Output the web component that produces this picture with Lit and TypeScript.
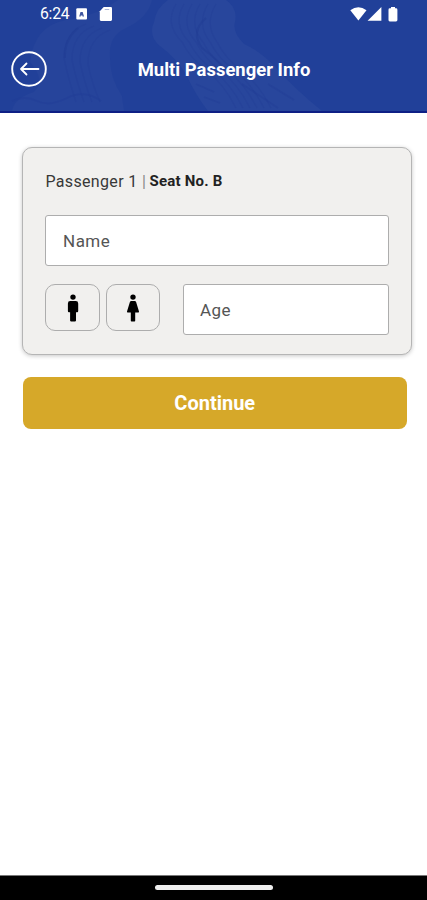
import { LitElement, html, css, svg } from "lit";
import { customElement, property } from "lit/decorators.js";

const manIcon = html`<svg width="12" height="29" viewBox="0 0 12 29">
  <circle cx="6" cy="3.1" r="2.7" />
  <path d="M3.2 7h5.6Q11.2 7 11.2 9.4V17q0 1.2-1 1.2H9V26.6q0 .8-.8.8H3.9q-.8 0-.8-.8V18.2H1.9q-1 0-1-1.2V9.4Q.9 7 3.2 7z" />
</svg>`;

const womanIcon = html`<svg width="14" height="29" viewBox="0 0 14 29">
  <circle cx="7" cy="3.1" r="2.7" />
  <path d="M5.3 7h3.4q1 0 1.4 1L13 17.6q.2.9-.7.9H9.2v8.2q0 .7-.7.7h-3q-.7 0-.7-.7v-8.2H1.7q-.9 0-.7-.9L3.9 8q.4-1 1.4-1z" />
</svg>`;

const ridges = [0, 1, 2, 3, 4, 5];

@customElement("status-bar")
class StatusBar extends LitElement {
  static styles = css`
    :host { display: flex; height: 28px; align-items: center; box-sizing: border-box; padding: 0 29px 0 40px; color: #fff; }
    .time { font-size: 15.7px; line-height: 28px; width: 36px; letter-spacing: -0.2px; }
    svg { display: block; flex: none; }
    .card { margin-left: 11px; }
    .space { flex: 1; }
    .battery { margin-left: 6px; }
  `;
  render() {
    return html`
      <span class="time">6:24</span>
      <svg width="12" height="12" viewBox="0 0 12 12"><rect x=".3" y=".3" width="10.7" height="11.2" rx="1" fill="#fff" /><path d="M3.200 8.500l1.300-4.500h2.200l1.300 4.500H6.500V7.500H4.700v1z" fill="#3f569f" /></svg>
      <svg class="card" width="14" height="14" viewBox="0 0 14 14"><path d="M4.700 0H11.800q1.200 0 1.200 1.200v11.600q0 1.100-1.200 1.100H2Q.8 13.900.8 12.800V4.300z" fill="#fff" /><path d="M5.700 2.500h4.500" stroke="#aeb8da" stroke-width="1" /></svg>
      <span class="space"></span>
      <svg width="17" height="14" viewBox="0 0 17 14"><path d="M.3 3.3Q8.3-3 16.5 3.3L8.4 13.6z" fill="#fff" /></svg>
      <svg width="15" height="14" viewBox="0 0 15 14"><path d="M14.4 0v13.7H.6z" fill="#fff" /></svg>
      <svg class="battery" width="10" height="15" viewBox="0 0 10 15"><path d="M3 0h4v1.300h1q1.400 0 1.400 1.400v10.400q0 1.300-1.400 1.300H1.800Q.5 14.400.5 13.100V2.700q0-1.400 1.300-1.400H3z" fill="#fff" /></svg>
    `;
  }
}

@customElement("passenger-card")
class PassengerCard extends LitElement {
  @property({ type: Number }) number = 1;
  @property() seat = "B";

  static styles = css`
    :host { display: block; box-sizing: border-box; height: 208px; border: 1px solid #b5b5b5; border-radius: 10px; background: #f1f0ee; padding: 22px 22px 0; box-shadow: 0 1px 4px rgba(0, 0, 0, 0.22); }
    .title { display: flex; height: 24px; line-height: 24px; font-size: 16px; color: #383838; margin-bottom: 21px; white-space: pre; }
    .who { letter-spacing: 0.33px; width: 97px; padding-left: 0.5px; box-sizing: border-box; }
    .bar { width: 7.500px; color: #888; }
    .seat { font-size: 15px; font-weight: 700; color: #222; letter-spacing: 0.22px; line-height: 23px; }
    .field { box-sizing: border-box; height: 51px; border: 1px solid #adadad; border-radius: 3px; background: #fff; padding-left: 17px; font-size: 17px; line-height: 50px; color: #555; letter-spacing: 0.5px; }
    .row { display: flex; margin-top: 18px; }
    .gender { box-sizing: border-box; width: 55px; height: 47px; border: 1px solid #adadad; border-radius: 10px; display: flex; align-items: center; justify-content: center; margin-right: 6px; padding-top: 2px; }
    .gender.last { width: 54px; margin-right: 23px; }
    .grow { flex: 1; letter-spacing: 0.4px; padding-left: 16px; }
    svg { display: block; fill: #000; }
  `;
  render() {
    return html`
      <div class="title"><span class="who">Passenger ${this.number}</span><span class="bar">|</span><span class="seat">Seat No. ${this.seat}</span></div>
      <div class="field">Name</div>
      <div class="row">
        <div class="gender">${manIcon}</div>
        <div class="gender last">${womanIcon}</div>
        <div class="field grow">Age</div>
      </div>
    `;
  }
}

@customElement("app-root")
class AppRoot extends LitElement {
  static styles = css`
    :host { display: flex; flex-direction: column; width: 100%; height: 900px; background: #fff; font-family: Roboto, sans-serif; overflow: hidden; }
    header { position: relative; flex: none; height: 113px; box-sizing: border-box; background: #214099; border-bottom: 2px solid #0e1f85; overflow: hidden; }
    .pattern { position: absolute; inset: 0; }
    status-bar { position: relative; }
    .nav { position: relative; display: grid; grid-template-columns: 36px 1fr 36px; align-items: center; height: 82px; padding: 0 0 0 11px; }
    .back { display: block; }
    h1 { margin: 0; text-align: center; font-size: 18.4px; line-height: 24px; font-weight: 700; color: #fff; white-space: nowrap; letter-spacing: 0.03px; padding: 1px 0 0 10px; }
    main { flex: 1; padding: 34px 15px 0 22px; }
    .continue { box-sizing: border-box; margin: 22px 5.5px 0 1px; height: 52px; border-radius: 8px; background: #d6a829; color: #fff; text-align: center; font-size: 20px; line-height: 52px; font-weight: 700; }
    footer { flex: none; height: 25px; box-sizing: border-box; background: #000; border-top: 1px solid #777; display: flex; justify-content: center; padding-top: 9px; }
    .handle { width: 118px; height: 5px; border-radius: 3px; background: #eee; }
  `;
  render() {
    return html`
      <header>
        <svg class="pattern" width="427" height="111" viewBox="0 0 427 111" fill="none">
          <path d="M30 62Q34 26 66 20Q96 16 118 0H152Q148 18 126 28Q108 36 110 58Q110 78 122 96L124 111H12Q14 98 34 92Q46 80 30 62z" fill="#26449b" />
          <path d="M168 0H226Q238 8 235 22Q232 32 244 44Q262 52 278 70Q296 90 322 111H208Q196 96 186 74Q176 58 160 46Q148 36 154 22Q156 8 168 0z" fill="#28469c" />
          ${ridges.map((i) => svg`<path d=${`M${176 + i * 8} 4q-12 20 ${6 - i} 38q8 16 24 28q18 14 30 38`} stroke="#203d96" stroke-width="1.2" opacity=".3" />`)}
          ${ridges.slice(0, 4).map((i) => svg`<path d=${`M${86 + i * 8} ${24 + i * 2}q-22 8-22 34q4 20 12 ${44 - i * 2}`} stroke="#203d96" stroke-width="1.3" opacity=".3" />`)}
          <path d="M206 18q-16 14-4 30q16 12 24 22" stroke="#1f3b94" stroke-width="2" opacity=".5" />
          <path d="M78 28q-14 12-13 30" stroke="#1f3b94" stroke-width="2" opacity=".5" />
          <path d="M12 101q13-6 25 0t30-3t34 3M196 84l18 8M204 97l16 6M242 84l36 24M268 84l26 16" stroke="#203d96" stroke-width="1.8" opacity=".4" />
        </svg>
        <status-bar></status-bar>
        <div class="nav">
          <svg class="back" width="36" height="38" viewBox="0 0 36 38" fill="none" stroke="#fff">
            <circle cx="18" cy="19" r="16.8" stroke-width="1.9" />
            <path d="M27.5 19H10M15.5 13.5L10 19l5.500 5.500" stroke-width="1.8" stroke-linecap="round" stroke-linejoin="round" />
          </svg>
          <h1>Multi Passenger Info</h1>
        </div>
      </header>
      <main>
        <passenger-card .number=${1} .seat=${"B"}></passenger-card>
        <div class="continue">Continue</div>
      </main>
      <footer><div class="handle"></div></footer>
    `;
  }
}
